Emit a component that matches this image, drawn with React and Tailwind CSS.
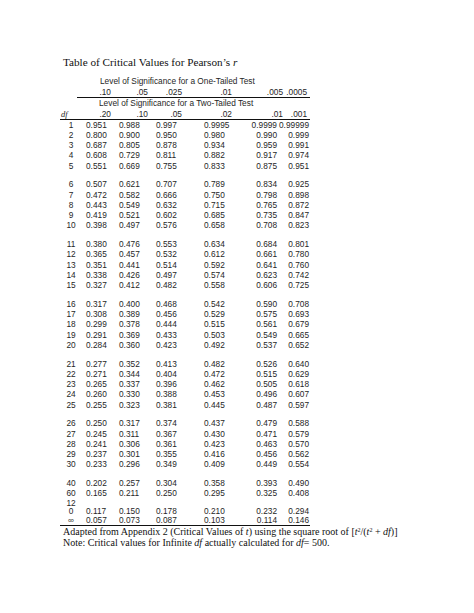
import React from 'react';

// critical values of r, columns = two-tailed .20 .10 .05 .02 .01 .001
const GROUPS = [
  [
    ['1', '0.951', '0.988', '0.997', '0.9995', '0.9999', '0.99999'],
    ['2', '0.800', '0.900', '0.950', '0.980', '0.990', '0.999'],
    ['3', '0.687', '0.805', '0.878', '0.934', '0.959', '0.991'],
    ['4', '0.608', '0.729', '0.811', '0.882', '0.917', '0.974'],
    ['5', '0.551', '0.669', '0.755', '0.833', '0.875', '0.951'],
  ],
  [
    ['6', '0.507', '0.621', '0.707', '0.789', '0.834', '0.925'],
    ['7', '0.472', '0.582', '0.666', '0.750', '0.798', '0.898'],
    ['8', '0.443', '0.549', '0.632', '0.715', '0.765', '0.872'],
    ['9', '0.419', '0.521', '0.602', '0.685', '0.735', '0.847'],
    ['10', '0.398', '0.497', '0.576', '0.658', '0.708', '0.823'],
  ],
  [
    ['11', '0.380', '0.476', '0.553', '0.634', '0.684', '0.801'],
    ['12', '0.365', '0.457', '0.532', '0.612', '0.661', '0.780'],
    ['13', '0.351', '0.441', '0.514', '0.592', '0.641', '0.760'],
    ['14', '0.338', '0.426', '0.497', '0.574', '0.623', '0.742'],
    ['15', '0.327', '0.412', '0.482', '0.558', '0.606', '0.725'],
  ],
  [
    ['16', '0.317', '0.400', '0.468', '0.542', '0.590', '0.708'],
    ['17', '0.308', '0.389', '0.456', '0.529', '0.575', '0.693'],
    ['18', '0.299', '0.378', '0.444', '0.515', '0.561', '0.679'],
    ['19', '0.291', '0.369', '0.433', '0.503', '0.549', '0.665'],
    ['20', '0.284', '0.360', '0.423', '0.492', '0.537', '0.652'],
  ],
  [
    ['21', '0.277', '0.352', '0.413', '0.482', '0.526', '0.640'],
    ['22', '0.271', '0.344', '0.404', '0.472', '0.515', '0.629'],
    ['23', '0.265', '0.337', '0.396', '0.462', '0.505', '0.618'],
    ['24', '0.260', '0.330', '0.388', '0.453', '0.496', '0.607'],
    ['25', '0.255', '0.323', '0.381', '0.445', '0.487', '0.597'],
  ],
  [
    ['26', '0.250', '0.317', '0.374', '0.437', '0.479', '0.588'],
    ['27', '0.245', '0.311', '0.367', '0.430', '0.471', '0.579'],
    ['28', '0.241', '0.306', '0.361', '0.423', '0.463', '0.570'],
    ['29', '0.237', '0.301', '0.355', '0.416', '0.456', '0.562'],
    ['30', '0.233', '0.296', '0.349', '0.409', '0.449', '0.554'],
  ],
];

const LAST = [
  ['40', '0.202', '0.257', '0.304', '0.358', '0.393', '0.490'],
  ['60', '0.165', '0.211', '0.250', '0.295', '0.325', '0.408'],
];

const ONE_TAILED = ['.10', '.05', '.025', '.01', '.005', '.0005'];
const TWO_TAILED = ['.20', '.10', '.05', '.02', '.01', '.001'];

const GRID = 'grid grid-cols-[22px_30px_38px_36px_54px_44px_26px]';

const VAL_CLS = [
  'text-center',
  'pl-[4px]',
  'pl-[7px]',
  'pl-[6px]',
  'pl-[18px]',
  'flex justify-end pr-[7px]',
  'flex justify-end pr-[1px]',
];

// headers are right-aligned a little past the values
const HEAD_CLS = [
  'flex justify-end pr-[1px]',
  'flex justify-end pr-[2px]',
  'flex justify-end pr-[4px]',
  'flex justify-end pr-[8px]',
  'flex justify-end pr-[1px]',
  'flex justify-end pr-[3px]',
];

function Row({ cells }) {
  return (
    <div className={`${GRID} h-[10.25px] leading-[10.25px]`}>
      {cells.map((c, i) => (
        <div key={i} className={`${VAL_CLS[i]} whitespace-nowrap`}>
          {c}
        </div>
      ))}
    </div>
  );
}

function HeadRow({ first, labels }) {
  return (
    <div className={`${GRID} h-[10px] leading-[10px]`}>
      <div className="pl-[1px]">{first}</div>
      {labels.map((l, i) => (
        <div key={i} className={`${HEAD_CLS[i]} whitespace-nowrap`}>
          {l}
        </div>
      ))}
    </div>
  );
}

export default function App() {
  const serif = { fontFamily: '"Liberation Serif", "Times New Roman", serif' };

  return (
    <div className="min-h-screen bg-white pl-[60px] pt-[55px] text-[#1a1a1a]">
      <div className="ml-[3px] h-[14px] text-[11.2px] leading-[14px] text-[#111]" style={serif}>
        Table of Critical Values for Pearson’s <i>r</i>
      </div>

      <div
        className="mt-[6.5px] w-[250px] text-[8.3px] text-[#262626]"
        style={{ fontFamily: '"Liberation Sans", Arial, sans-serif' }}
      >
        <div className="h-[11px] pl-[40px] leading-[11px]">
          Level of Significance for a One-Tailed Test
        </div>
        <HeadRow first="" labels={ONE_TAILED} />
        <div className="ml-[17px] h-px bg-[#111]" />
        <div className="h-[11px] pl-[39px] leading-[11px]">
          Level of Significance for a Two-Tailed Test
        </div>
        <HeadRow first={<i style={serif} className="text-[8.5px]">df</i>} labels={TWO_TAILED} />
        <div className="h-px bg-[#111]" />

        {GROUPS.map((g, gi) => (
          <div key={gi} className="pb-[8.5px]">
            {g.map(r => (
              <Row key={r[0]} cells={r} />
            ))}
          </div>
        ))}

        {LAST.map(r => (
          <Row key={r[0]} cells={r} />
        ))}
        <div className={`${GRID} h-[17px] items-end leading-[8.5px]`}>
          <div className="text-center">
            12
            <br />0
          </div>
          {['0.117', '0.150', '0.178', '0.210', '0.232', '0.294'].map((v, i) => (
            <div key={i} className={VAL_CLS[i + 1]}>
              {v}
            </div>
          ))}
        </div>
        <div className={`${GRID} h-[9px] leading-[9px]`}>
          <div className="text-center">∞</div>
          {['0.057', '0.073', '0.087', '0.103', '0.114', '0.146'].map((v, i) => (
            <div key={i} className={VAL_CLS[i + 1]}>
              {v}
            </div>
          ))}
        </div>
        <div className="h-px bg-[#111]" />
      </div>

      <div className="ml-[3px] text-[10px] leading-[11.5px] text-[#111]" style={serif}>
        <div>
          Adapted from Appendix 2 (Critical Values of <i>t</i>) using the square root of [
          <i>t</i>
          <sup className="text-[6px]">2</sup>/(<i>t</i>
          <sup className="text-[6px]">2</sup> + <i>df</i>)]
        </div>
        <div>
          Note: Critical values for Infinite <i>df</i> actually calculated for <i>df</i>= 500.
        </div>
      </div>
    </div>
  );
}
